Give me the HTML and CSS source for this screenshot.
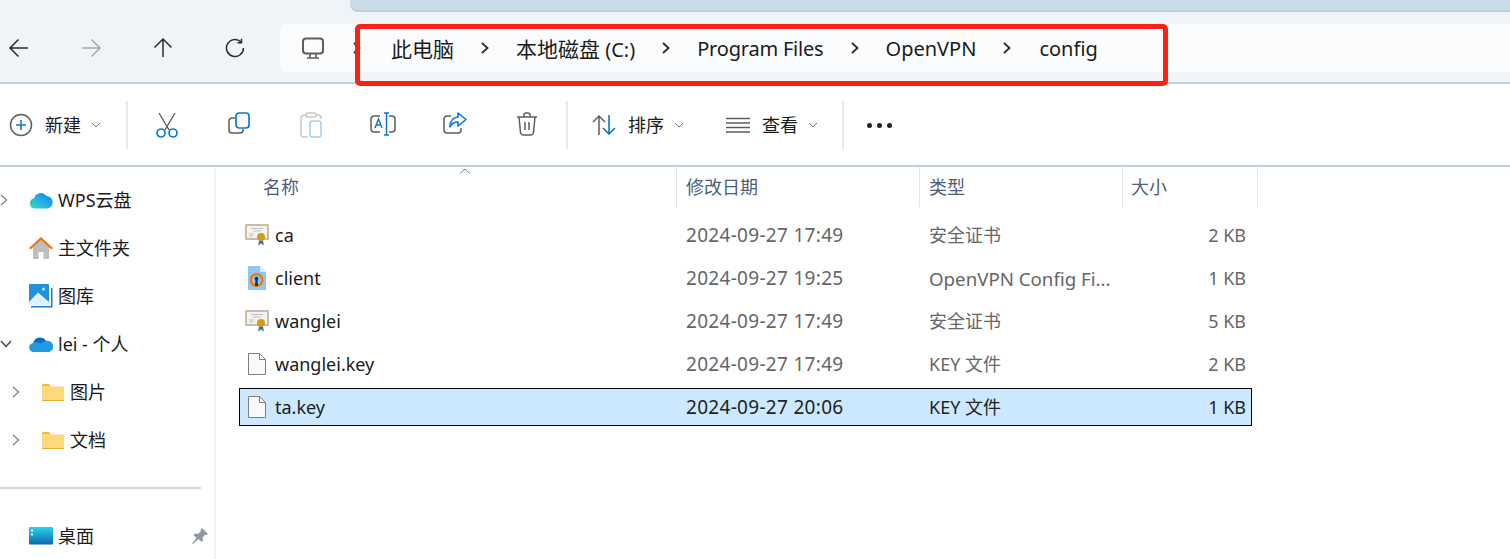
FILE: index.html
```html
<!DOCTYPE html>
<html lang="zh-CN">
<head>
    <meta charset="UTF-8">
    <meta name="viewport" content="width=device-width, initial-scale=1.0">
    <title>config - 文件资源管理器</title>
    <link rel="stylesheet" href="styles.css">
</head>
<body>
    <div class="window">
        <header class="topbar">
            <div class="tab-strip"></div>
            <div class="nav-row">
                <div class="nav-buttons">
                    <span class="nav-btn"><svg width="22" height="20" viewBox="0 0 22 20" class="ico-line"><path d="M20 10H2M10.500 1.500 2 10l8.500 8.500"/></svg></span>
                    <span class="nav-btn"><svg width="22" height="20" viewBox="0 0 22 20" class="ico-line ico-faded"><path d="M2 10h18M11.500 1.500 20 10l-8.500 8.500"/></svg></span>
                    <span class="nav-btn"><svg width="20" height="22" viewBox="0 0 20 22" class="ico-line"><path d="M10 20V2M1.500 10.500 10 2l8.500 8.500"/></svg></span>
                    <span class="nav-btn"><svg width="20" height="20" viewBox="0 0 20 20" class="ico-line"><path d="M15.800 3.800A8.500 8.500 0 1 0 18.500 10M16.500 .8v4h-4"/></svg></span>
                </div>
                <nav class="address">
                    <svg class="pc-icon" width="24" height="23" viewBox="0 0 24 23" fill="none" stroke="#5e5e5e" stroke-width="2"><rect x="2" y="1.500" width="20" height="15" rx="3"/><path d="M9 17v3.500M15 17v3.500M6 21h12" stroke-width="1.600"/></svg>
                    <span class="crumb-sep first"><svg width="8" height="12" viewBox="0 0 8 12" class="ico-chev"><path d="M1 1l5.500 5L1 11"/></svg></span>
                    <span class="crumb">此电脑</span>
                    <span class="crumb-sep"><svg width="8" height="12" viewBox="0 0 8 12" class="ico-chev"><path d="M1 1l5.500 5L1 11"/></svg></span>
                    <span class="crumb">本地磁盘<span class="latin"> (C:)</span></span>
                    <span class="crumb-sep"><svg width="8" height="12" viewBox="0 0 8 12" class="ico-chev"><path d="M1 1l5.500 5L1 11"/></svg></span>
                    <span class="crumb latin tight">Program Files</span>
                    <span class="crumb-sep"><svg width="8" height="12" viewBox="0 0 8 12" class="ico-chev"><path d="M1 1l5.500 5L1 11"/></svg></span>
                    <span class="crumb latin">OpenVPN</span>
                    <span class="crumb-sep"><svg width="8" height="12" viewBox="0 0 8 12" class="ico-chev"><path d="M1 1l5.500 5L1 11"/></svg></span>
                    <span class="crumb latin">config</span>
                </nav>
            </div>
        </header>

        <!-- 红框标注 -->
        <div class="red-mark"></div>

        <div class="toolbar">
            <div class="tool-new">
                <svg width="24" height="24" viewBox="0 0 24 24" fill="none"><circle cx="12" cy="12" r="10.500" stroke="#5e5e5e" stroke-width="1.500"/><path d="M12 7v10M7 12h10" stroke="#0f78d4" stroke-width="1.600"/></svg>
                <span class="tool-label">新建</span>
                <svg class="caret" width="10" height="6" viewBox="0 0 10 6"><path d="M1 1l4 4 4-4"/></svg>
            </div>
            <span class="tool-divider"></span>
            <div class="tool-group">
                <span class="tool-btn"><svg width="24" height="26" viewBox="0 0 24 26" fill="none"><path d="M4 1l10 17M20 1 10 18" stroke="#5e5e5e" stroke-width="1.400"/><circle cx="6" cy="21" r="4" stroke="#0f78d4" stroke-width="1.700"/><circle cx="18" cy="21" r="4" stroke="#0f78d4" stroke-width="1.700"/></svg></span>
                <span class="tool-btn"><svg width="22" height="22" viewBox="0 0 22 22" fill="none"><path d="M7 6H4a3 3 0 0 0-3 3v9a3 3 0 0 0 3 3h8a3 3 0 0 0 3-3v-1" stroke="#5e5e5e" stroke-width="1.500"/><rect x="8" y="1" width="13" height="15" rx="3" fill="#fafafa" stroke="#0f78d4" stroke-width="1.700"/></svg></span>
                <span class="tool-btn"><svg width="22" height="26" viewBox="0 0 22 26" fill="none"><path d="M7 3H4a3 3 0 0 0-3 3v16a3 3 0 0 0 3 3h4M15 3h3a3 3 0 0 1 3 3v1" stroke="#c8c8c8" stroke-width="1.500"/><rect x="6" y="1" width="10" height="4" rx="1.500" stroke="#c8c8c8" stroke-width="1.400"/><rect x="10" y="9" width="11" height="16" rx="2.500" stroke="#a9d0f0" stroke-width="1.600"/></svg></span>
                <span class="tool-btn"><svg width="26" height="24" viewBox="0 0 26 24" fill="none"><path d="M10 4H4a3 3 0 0 0-3 3v10a3 3 0 0 0 3 3h6M19 4h3a3 3 0 0 1 3 3v10a3 3 0 0 1-3 3h-3" stroke="#5e5e5e" stroke-width="1.500"/><path d="M14 1h5M14 23h5M16.500 1v22M5 16l3.500-9 3.500 9M6.300 13h4.400" stroke="#0f78d4" stroke-width="1.500"/></svg></span>
                <span class="tool-btn"><svg width="24" height="22" viewBox="0 0 24 22" fill="none"><path d="M8 4H4a3 3 0 0 0-3 3v11a3 3 0 0 0 3 3h11a3 3 0 0 0 3-3v-2" stroke="#5e5e5e" stroke-width="1.500"/><path d="M15 1l8 6.500-8 6.500v-4c-4 0-6.500 1.500-8 5 0-6 3-9.500 8-10z" stroke="#0f78d4" stroke-width="1.600" stroke-linejoin="round"/></svg></span>
                <span class="tool-btn"><svg width="22" height="24" viewBox="0 0 22 24" fill="none" stroke="#5e5e5e" stroke-width="1.500"><path d="M1 5h20M8 5V3a2 2 0 0 1 2-2h2a2 2 0 0 1 2 2v2M3 5l1.500 15.500A3 3 0 0 0 7.500 23h7a3 3 0 0 0 3-2.500L19 5M9 10v8M13 10v8"/></svg></span>
            </div>
            <span class="tool-divider"></span>
            <div class="tool-menu sort-menu">
                <svg width="24" height="22" viewBox="0 0 24 22" fill="none"><path d="M7 21V2M1 8l6-6 6 6" stroke="#5e5e5e" stroke-width="1.500"/><path d="M17 1v19M11 14l6 6 6-6" stroke="#0f78d4" stroke-width="1.600"/></svg>
                <span class="tool-label">排序</span>
                <svg class="caret" width="10" height="6" viewBox="0 0 10 6"><path d="M1 1l4 4 4-4"/></svg>
            </div>
            <div class="tool-menu view-menu">
                <svg width="24" height="16" viewBox="0 0 24 16" fill="none" stroke="#5e5e5e" stroke-width="1.500"><path d="M0 1.500h24M0 6h24M0 10.500h24M0 15h24"/></svg>
                <span class="tool-label">查看</span>
                <svg class="caret" width="10" height="6" viewBox="0 0 10 6"><path d="M1 1l4 4 4-4"/></svg>
            </div>
            <span class="tool-divider"></span>
            <div class="tool-more"><i></i><i></i><i></i></div>
        </div>

        <div class="content">
            <aside class="sidebar">
                <div class="side-item">
                    <span class="side-arrow"><svg width="8" height="12" viewBox="0 0 8 12" class="ico-arrow"><path d="M1 1l5.500 5L1 11"/></svg></span>
                    <svg class="side-icon" width="24" height="18" viewBox="0 0 24 18"><defs><linearGradient id="wps" x1="0" y1="1" x2="1" y2="0"><stop offset="0" stop-color="#2de0b0"/><stop offset=".55" stop-color="#25a9ef"/><stop offset="1" stop-color="#1677e6"/></linearGradient></defs><path d="M6 17.500a5 5 0 0 1-1-9.900A7 7 0 0 1 17.500 5a6.300 6.300 0 0 1 1 12.500z" fill="url(#wps)"/></svg>
                    <span class="side-label">WPS云盘</span>
                </div>
                <div class="side-item">
                    <span class="side-arrow"></span>
                    <svg class="side-icon" width="24" height="24" viewBox="0 0 24 24"><path d="M4 11 12 3l8 8v12h-5.500v-7h-5v7H4z" fill="#bdbdbd"/><path d="M0 12 12 1l12 11-1.500 1.500L12 4 1.500 13.500z" fill="#e8770c"/></svg>
                    <span class="side-label">主文件夹</span>
                </div>
                <div class="side-item">
                    <span class="side-arrow"></span>
                    <svg class="side-icon" width="24" height="24" viewBox="0 0 24 24"><path d="M2 22h20V4h1.500v19.500H2z" fill="#2a76c4"/><rect x="0" y="0" width="20" height="21" rx="1" fill="#1f93e0"/><path d="M0 18 9 8.500 20 18v3H0z" fill="#dff0fd"/><circle cx="14.500" cy="5" r="1.500" fill="#d6ecfb"/></svg>
                    <span class="side-label">图库</span>
                </div>
                <div class="side-item">
                    <span class="side-arrow"><svg width="12" height="8" viewBox="0 0 12 8" class="ico-arrow dark"><path d="M1 1l5 5.500L11 1"/></svg></span>
                    <svg class="side-icon" width="24" height="16" viewBox="0 0 24 16"><path d="M5 16a4.500 4.500 0 0 1-.7-9A7 7 0 0 1 17 5a5.500 5.500 0 0 1 3 11z" fill="#1f9ae6"/><path d="M4.300 7A7 7 0 0 1 17 5c-2.500 0-4 1-5 2.500C9.500 6 6.500 6 4.300 7z" fill="#0a6cc0"/></svg>
                    <span class="side-label">lei - 个人</span>
                </div>
                <div class="side-item nested">
                    <span class="side-arrow"><svg width="8" height="12" viewBox="0 0 8 12" class="ico-arrow"><path d="M1 1l5.500 5L1 11"/></svg></span>
                    <svg class="side-icon folder" width="22" height="17" viewBox="0 0 22 17"><path d="M0 1a1 1 0 0 1 1-1h6l2 2.500H0z" fill="#fbb92a"/><rect y="2.500" width="22" height="14.500" fill="#fdd97c"/><rect y="16" width="22" height="1" fill="#e8ab3a"/></svg>
                    <span class="side-label">图片</span>
                </div>
                <div class="side-item nested">
                    <span class="side-arrow"><svg width="8" height="12" viewBox="0 0 8 12" class="ico-arrow"><path d="M1 1l5.500 5L1 11"/></svg></span>
                    <svg class="side-icon folder" width="22" height="17" viewBox="0 0 22 17"><path d="M0 1a1 1 0 0 1 1-1h6l2 2.500H0z" fill="#fbb92a"/><rect y="2.500" width="22" height="14.500" fill="#fdd97c"/><rect y="16" width="22" height="1" fill="#e8ab3a"/></svg>
                    <span class="side-label">文档</span>
                </div>
                <div class="side-divider"><hr></div>
                <div class="side-item">
                    <span class="side-arrow"></span>
                    <svg class="side-icon" width="24" height="18" viewBox="0 0 24 18"><defs><linearGradient id="desk" x1="0" y1="0" x2="0" y2="1"><stop offset="0" stop-color="#2cd3e8"/><stop offset="1" stop-color="#0a68b4"/></linearGradient></defs><rect width="24" height="17.500" rx="1" fill="url(#desk)"/><rect x="2" y="2.500" width="2" height="2" fill="#e8fbff"/><rect x="2" y="6.500" width="2" height="2" fill="#e8fbff"/></svg>
                    <span class="side-label">桌面</span>
                    <svg class="pin" width="16" height="17" viewBox="0 0 16 17"><path d="M10 0l6 6-1.500 1-1-.5-3 3 .5 3-1.500 1.500-3-3L1 16l-1-.5 4.500-5.500-3-3L3 5.500l3 .5 3-3-.5-1z" fill="#8d98a3"/></svg>
                </div>
            </aside>

            <main class="files">
                <div class="file-head">
                    <div class="col col-name">名称<svg class="sort-up" width="12" height="6" viewBox="0 0 12 6"><path d="M1 5.500 6 1l5 4.500"/></svg></div>
                    <div class="col col-date">修改日期</div>
                    <div class="col col-type">类型</div>
                    <div class="col col-size">大小</div>
                </div>

                <div class="file-list">
                    <div class="file-row">
                        <svg class="file-icon" width="24" height="22" viewBox="0 0 24 22"><rect width="24" height="16" rx="1" fill="#c9bda9"/><rect x="2" y="2" width="20" height="12" fill="#f6f3ec"/><path d="M6 4.500h12M8 7h8M4 10h5M4 12h4" stroke="#b9c2cc"/><path d="M14.500 15l-1.500 6.500 3-2 3 2-1.500-6.500z" fill="#2f71e0"/><circle cx="16" cy="13" r="4" fill="#d49b17"/></svg>
                        <span class="file-name">ca</span><span class="file-date">2024-09-27 17:49</span><span class="file-type">安全证书</span><span class="file-size">2 KB</span>
                    </div>
                    <div class="file-row">
                        <svg class="file-icon" width="24" height="24" viewBox="0 0 24 24"><path d="M3 0h12l6 6v18H3z" fill="#8fc8f7"/><path d="M15 0l6 6h-6z" fill="#e0f0fd"/><circle cx="11.500" cy="14" r="5.800" fill="none" stroke="#ee7c12" stroke-width="2.500"/><circle cx="11.500" cy="12.500" r="1.800" fill="#12305c"/><path d="M10.500 13h2l.5 7h-3z" fill="#12305c"/></svg>
                        <span class="file-name">client</span><span class="file-date">2024-09-27 19:25</span><span class="file-type long">OpenVPN Config Fi...</span><span class="file-size">1 KB</span>
                    </div>
                    <div class="file-row">
                        <svg class="file-icon" width="24" height="22" viewBox="0 0 24 22"><rect width="24" height="16" rx="1" fill="#c9bda9"/><rect x="2" y="2" width="20" height="12" fill="#f6f3ec"/><path d="M6 4.500h12M8 7h8M4 10h5M4 12h4" stroke="#b9c2cc"/><path d="M14.500 15l-1.500 6.500 3-2 3 2-1.500-6.500z" fill="#2f71e0"/><circle cx="16" cy="13" r="4" fill="#d49b17"/></svg>
                        <span class="file-name">wanglei</span><span class="file-date">2024-09-27 17:49</span><span class="file-type">安全证书</span><span class="file-size">5 KB</span>
                    </div>
                    <div class="file-row">
                        <svg class="file-icon" width="24" height="22" viewBox="0 0 24 22"><path d="M3.500 .5h11l6 6v15h-17z" fill="#fafafa" stroke="#7f7f7f"/><path d="M14.500 .5v6h6" fill="none" stroke="#7f7f7f"/></svg>
                        <span class="file-name">wanglei.key</span><span class="file-date">2024-09-27 17:49</span><span class="file-type">KEY 文件</span><span class="file-size">2 KB</span>
                    </div>
                    <div class="file-row selected">
                        <svg class="file-icon" width="24" height="22" viewBox="0 0 24 22"><path d="M3.500 .5h11l6 6v15h-17z" fill="#fafafa" stroke="#7f7f7f"/><path d="M14.500 .5v6h6" fill="none" stroke="#7f7f7f"/></svg>
                        <span class="file-name">ta.key</span><span class="file-date">2024-09-27 20:06</span><span class="file-type">KEY 文件</span><span class="file-size">1 KB</span>
                    </div>
                </div>
            </main>
        </div>
    </div>
</body>
</html>
```

FILE: styles.css
```css
body, hr {
    margin: 0;
    padding: 0;
}

body {
    font-family: "Noto Sans", "Noto Sans CJK SC", sans-serif;
    color: #1b1b1b;
    background-color: white;
    overflow: hidden;
}

svg {
    display: block;
    flex-shrink: 0;
}

.window {
    position: relative;
    height: 559px;
    overflow: hidden;
}

/* 顶部地址栏 */
.topbar {
    height: 84px;
    box-sizing: border-box;
    background-color: #eff4f9;
    border-bottom: 2px solid #bfcfdb;
}

.tab-strip {
    height: 12px;
    margin-left: 350px;
    box-sizing: border-box;
    background-color: #cbdce9;
    border-bottom: 2px solid #bfcfdb;
    border-bottom-left-radius: 8px;
}

.nav-row {
    display: flex;
    margin-top: 12px;
    height: 48px;
}

.nav-buttons {
    display: flex;
    width: 280px;
}

.nav-btn {
    width: 72px;
    flex-shrink: 0;
    display: flex;
    justify-content: center;
    align-items: center;
}

.nav-btn:first-child {
    margin-left: -17px;
}

.ico-line {
    fill: none;
    stroke: #2b2b2b;
    stroke-width: 1.500;
}

.ico-faded {
    stroke: #a5a8ab;
}

.address {
    flex: 1;
    display: flex;
    align-items: center;
    padding-left: 21px;
    background-color: #fbfcfe;
    border-radius: 8px 0 0 8px;
    font-size: 21px;
}

.crumb {
    white-space: nowrap;
}

.crumb:last-child {
    margin-left: 1px;
}

.latin {
    font-size: 20px;
}

.latin.tight {
    letter-spacing: -0.200px;
}

.crumb-sep {
    width: 62px;
    display: flex;
    justify-content: center;
}

.crumb-sep.first {
    width: 66px;
    justify-content: flex-start;
    padding-left: 28px;
    box-sizing: border-box;
}

.ico-chev {
    fill: none;
    stroke: #2b2b2b;
    stroke-width: 1.800;
}

.red-mark {
    position: absolute;
    left: 355px;
    top: 24px;
    width: 813px;
    height: 62px;
    box-sizing: border-box;
    border: 5px solid #ff2012;
    border-radius: 5px;
}

/* 工具栏 */
.toolbar {
    height: 83px;
    box-sizing: border-box;
    border-bottom: 2px solid #bfcfdb;
    padding-top: 1px;
    display: flex;
    align-items: center;
    font-size: 18px;
}

.tool-new {
    width: 126px;
    display: flex;
    align-items: center;
    padding-left: 9px;
    box-sizing: border-box;
}

.tool-label {
    margin-left: 12px;
    margin-bottom: 3px;
}

.caret {
    margin-left: 10px;
    fill: none;
    stroke: #7a7a7a;
}

.tool-divider {
    width: 2px;
    height: 48px;
    background-color: #e8e8e8;
}

.tool-group {
    display: flex;
    margin-left: 3px;
    margin-right: 3px;
}

.tool-btn {
    width: 72px;
    display: flex;
    justify-content: center;
}

.tool-menu {
    display: flex;
    align-items: center;
}

.sort-menu {
    margin-left: 24px;
}

.view-menu {
    margin-left: 42px;
    margin-right: 24px;
}

.tool-more {
    display: flex;
    gap: 5px;
    margin-left: 23px;
}

.tool-more i {
    width: 5px;
    height: 5px;
    border-radius: 50%;
    background-color: #222;
}

/* 内容区 */
.content {
    display: flex;
    height: 392px;
}

.sidebar {
    width: 216px;
    box-sizing: border-box;
    padding-top: 9px;
    border-right: 2px solid #f4f4f4;
    font-size: 18px;
}

.side-item {
    position: relative;
    height: 48px;
    display: flex;
    align-items: center;
}

.side-item.nested {
    padding-left: 12px;
}

.side-arrow {
    width: 29px;
    flex-shrink: 0;
}

.nested .side-arrow {
    width: 30px;
}

.side-icon {
    margin-right: 5px;
}

.side-icon.folder {
    margin-right: 6px;
}

.side-label {
    margin-bottom: 2px;
}

.ico-arrow {
    fill: none;
    stroke: #8c8c8c;
    stroke-width: 1.500;
}

.ico-arrow.dark {
    stroke: #444;
}

.side-divider {
    height: 48px;
    display: flex;
    align-items: center;
}

.side-divider hr {
    width: 201px;
    height: 2px;
    border: none;
    background-color: #d6d6d6;
}

.pin {
    position: absolute;
    left: 192px;
    top: 16px;
}

.files {
    flex: 1;
    font-size: 18px;
}

.file-head {
    display: flex;
    height: 40px;
    color: #4c607a;
}

.col {
    position: relative;
    box-sizing: border-box;
    border-right: 1px solid #e2e6ea;
    line-height: 40px;
}

.col-name {
    width: 461px;
    padding-left: 47px;
}

.col-date {
    width: 243px;
    padding-left: 9px;
}

.col-type {
    width: 203px;
    padding-left: 9px;
}

.col-size {
    width: 135px;
    padding-left: 8px;
}

.sort-up {
    position: absolute;
    left: 243px;
    top: 1px;
    fill: none;
    stroke: #7d7d7d;
}

.file-list {
    display: flex;
    flex-direction: column;
    gap: 5px;
    margin: 9px 0 0 23px;
    width: 1013px;
}

.file-row {
    height: 38px;
    box-sizing: border-box;
    border: 1px solid transparent;
    padding: 0 5px;
    display: grid;
    grid-template-columns: 30px 411px 243px 1fr auto;
    align-items: center;
    white-space: nowrap;
}

.file-row.selected {
    background-color: #cce8ff;
    border-color: #000;
}

.file-date, .file-type, .file-size {
    color: #666;
}

.file-date {
    font-size: 19px;
    letter-spacing: 0.300px;
}

.file-type {
    margin-bottom: 2px;
}

.file-type.long {
    margin-bottom: 0;
    font-size: 18.700px;
}

.selected .file-date, .selected .file-type, .selected .file-size {
    color: #222;
}
```
